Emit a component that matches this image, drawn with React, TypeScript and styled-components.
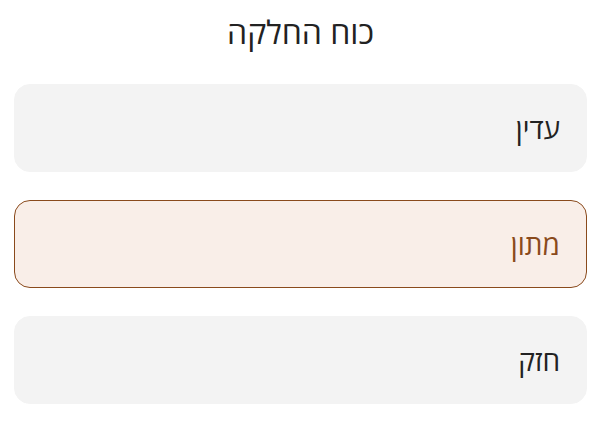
import React from "react";
import styled, { createGlobalStyle } from "styled-components";

const Global = createGlobalStyle`
  html, body { margin: 0; padding: 0; background: #ffffff; }
  body { font-family: "Noto Sans", "Open Sans", sans-serif; }
`;

const Page = styled.div`
  direction: rtl;
  width: 600px;
  box-sizing: border-box;
  padding: 0 13px 0 14px;
  display: flex;
  flex-direction: column;
`;

const Title = styled.h1`
  margin: 0;
  height: 84px;
  padding-top: 10px;
  box-sizing: border-box;
  text-align: center;
  font-size: 32px;
  font-weight: 400;
  line-height: 44px;
  color: #222222;
`;

const List = styled.div`
  display: flex;
  flex-direction: column;
  gap: 28px;
`;

const Option = styled.button<{ $selected?: boolean }>`
  all: unset;
  box-sizing: border-box;
  display: flex;
  align-items: center;
  height: 88px;
  padding: 0 26px;
  border-radius: 16px;
  font-family: inherit;
  font-size: 28px;
  line-height: 36px;
  background: ${(p) => (p.$selected ? "#f9eee8" : "#f3f3f3")};
  border: 1.5px solid ${(p) => (p.$selected ? "#8a4a1c" : "#f3f3f3")};
  color: ${(p) => (p.$selected ? "#8a4a1c" : "#222222")};
`;

const options = [
  { label: "עדין", selected: false },
  { label: "מתון", selected: true },
  { label: "חזק", selected: false },
];

export default function App() {
  return (
    <>
      <Global />
      <Page>
        <Title>כוח החלקה</Title>
        <List>
          {options.map((o) => (
            <Option key={o.label} $selected={o.selected}>
              {o.label}
            </Option>
          ))}
        </List>
      </Page>
    </>
  );
}
